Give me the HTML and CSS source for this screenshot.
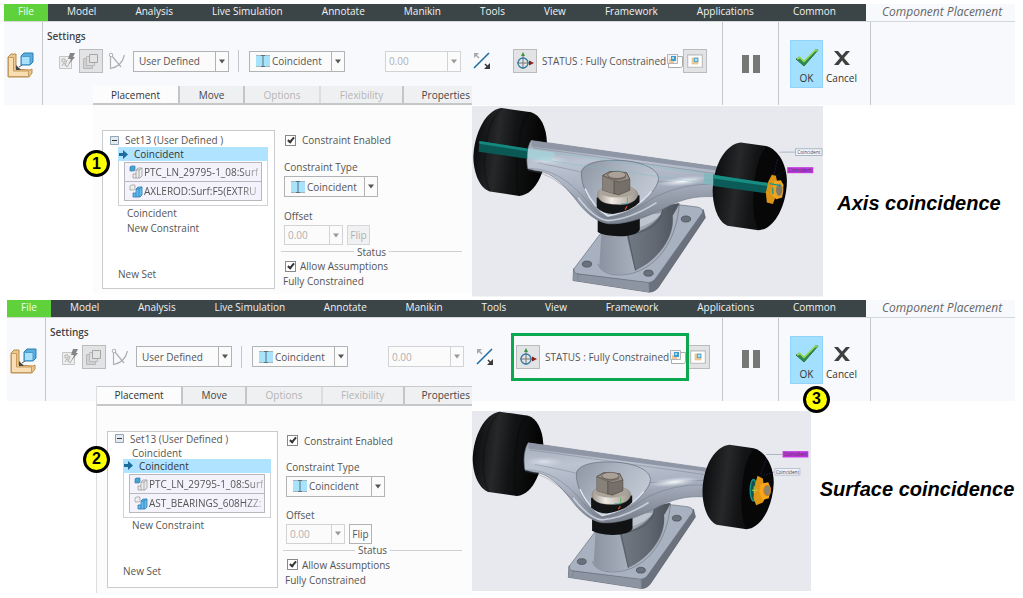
FILE: index.html
```html
<!DOCTYPE html>
<html lang="en">
<head>
<meta charset="utf-8">
<title>Component Placement</title>
<link rel="stylesheet" href="styles.css">
</head>
<body>
<svg class="defs" aria-hidden="true">
  <defs>
    <linearGradient id="rubber" x1="0" x2="1" y1="0" y2="0.15">
      <stop offset="0" stop-color="#060607"/><stop offset=".12" stop-color="#101112"/><stop offset=".38" stop-color="#27282a"/><stop offset=".6" stop-color="#131415"/><stop offset="1" stop-color="#030303"/>
    </linearGradient>
    <linearGradient id="alloy" x1="0" x2="0.15" y1="0" y2="1">
      <stop offset="0" stop-color="#a3abb9"/><stop offset=".3" stop-color="#bcc4d2"/><stop offset=".6" stop-color="#a9b1c0"/><stop offset="1" stop-color="#7d8592"/>
    </linearGradient>
    <linearGradient id="cup" x1="0" x2="1" y1="0" y2=".5">
      <stop offset="0" stop-color="#8d95a3"/><stop offset=".45" stop-color="#a9b1be"/><stop offset="1" stop-color="#c3cad6"/>
    </linearGradient>
    <linearGradient id="post" x1="0" x2="1" y1="0" y2="0">
      <stop offset="0" stop-color="#8b93a0"/><stop offset=".45" stop-color="#a8b0bd"/><stop offset="1" stop-color="#878f9b"/>
    </linearGradient>
    <linearGradient id="postside" x1="0" x2="1" y1="0" y2="0">
      <stop offset="0" stop-color="#727a85"/><stop offset=".6" stop-color="#5f666f"/><stop offset="1" stop-color="#4b5159"/>
    </linearGradient>
    <linearGradient id="washer" x1="0" x2="1" y1="0" y2="0">
      <stop offset="0" stop-color="#9d968d"/><stop offset=".35" stop-color="#eeeae4"/><stop offset="1" stop-color="#9b948b"/>
    </linearGradient>
    <radialGradient id="glint"><stop offset="0" stop-color="#fff" stop-opacity=".95"/><stop offset="1" stop-color="#e4ecf8" stop-opacity="0"/></radialGradient>
  </defs>

  <symbol id="i-assembly" viewBox="0 0 28 28">
    <path d="M1 6l3-3h5v15l14 1 2-1v4l-3 4H1z" fill="#e9c58f" stroke="#b98d4f"/>
    <path d="M1.500 6.500h5v13.500h15v5.500h-20z" fill="#f8deb2" stroke="#c69b5d"/>
    <path d="M14 5l3-3h9v9l-3 3h-9z" fill="#58aede" stroke="#2c7eb2"/>
    <path d="M14.500 5.500h8.500v8h-8.500z" fill="#a9e0fb" stroke="#4a9ccc"/>
    <path d="M15 14l-3 2" fill="none" stroke="#555"/><path d="M9 14v5h5z" fill="#444"/>
  </symbol>
  <symbol id="i-auto" viewBox="0 0 18 18">
    <path d="M1.500 4.500h12v12h-12z" fill="#eee" stroke="#c5c5c5"/>
    <path d="M4 7h3v3H4zM4 14l2-3 3 4 3-5M9 8l-2 6" fill="none" stroke="#b3b3b3"/>
    <path d="M12 1h5l-2 4h2l-6 7 2-5h-3z" fill="#858585"/>
  </symbol>
  <symbol id="i-window" viewBox="0 0 18 18">
    <path d="M1.500 6.500h9v10h-9z" fill="#d0d0d0" stroke="#b8b8b8"/>
    <path d="M4.500 4.500h8v9h-8z" fill="#ddd" stroke="#bbb"/>
    <path d="M7.500 2.500h8v8h-8z" fill="#e3e3e3" stroke="#a5a5a5"/>
  </symbol>
  <symbol id="i-curve" viewBox="0 0 18 18">
    <path d="M4 4l9 11M2.500 4.500v12C11 15 15 9 16.500 3" fill="none" stroke="#b0b0b0" stroke-width="1.200"/>
    <circle cx="3" cy="3" r="1.800" fill="#f8f9fc" stroke="#b0b0b0"/>
  </symbol>
  <symbol id="i-coincident" viewBox="0 0 14 12">
    <path d="M0 1h14v10H0z" fill="#a7e3fa"/><path d="M0 .5h14M0 11.500h14" stroke="#a5b5bd"/>
    <path d="M7 1v10M5 .5h4M5 11.500h4" stroke="#557480"/>
  </symbol>
  <symbol id="i-flip" viewBox="0 0 18 18">
    <path d="M1 16L16 1" stroke="#236da6" stroke-width="1.600"/>
    <path d="M1 6V1h5z" fill="#a9a9a9"/><path d="M3 3l3 3" stroke="#a9a9a9" stroke-width="1.500"/>
    <path d="M17 11v6h-6z" fill="#3a3a3a"/><path d="M12 12l3 3" stroke="#3a3a3a" stroke-width="1.500"/>
  </symbol>
  <symbol id="i-dragger" viewBox="0 0 18 18">
    <path d="M7 2v15M1 11h15" stroke="#777" />
    <circle cx="7" cy="11" r="5" fill="none" stroke="#327ba2" stroke-width="1.300"/>
    <path d="M7 0l2 4H5z" fill="#3d9140"/><path d="M18 11l-5-2.500v5z" fill="#8c2018"/>
  </symbol>
  <symbol id="i-separate" viewBox="0 0 16 16">
    <path d="M6.500 3.500h9v9q0 2-2 2h-12v-4" fill="#fff" stroke="#aaa"/>
    <path d="M.5 1.500h10v9h-10z" fill="#f1f2f4" stroke="#b5b5b5"/>
    <path d="M2 6h5v4H2z" fill="#edc998"/><path d="M4 3h5v5H4z" fill="#449ccb"/><path d="M5 4h2v2H5z" fill="#a4dcf5"/>
  </symbol>
  <symbol id="i-inwindow" viewBox="0 0 16 14">
    <path d="M1.500 1.500h13v11h-13z" fill="#fff" stroke="#bbb"/>
    <path d="M5 4h6v6H5z" fill="#ecc591"/><path d="M7 4h4v4H7z" fill="#55a9d5"/><path d="M8 5h2v2H8z" fill="#b5e4fa"/>
  </symbol>
  <symbol id="i-pause" viewBox="0 0 18 18"><path d="M0 0h7v18H0zM11 0h7v18h-7z" fill="#777"/></symbol>
  <symbol id="i-ok" viewBox="0 0 24 18">
    <path d="M1 10l4-2 4 4L20 1h3L9 17z" fill="#2d8b4c" stroke="#297842"/>
    <path d="M2 10l3-1.500 4 4L20 1.500h2.500" fill="none" stroke="#a3dd58" stroke-width="1.500"/>
  </symbol>
  <symbol id="i-cancel" viewBox="0 0 16 14"><path d="M0 0h4l4 4.500L12 0h4l-6 7 6 7h-4.500L8 9.500 4.500 14H0l6-7z" fill="#3f3f3f"/></symbol>
  <symbol id="i-down" viewBox="0 0 6 4"><path d="M0 0h6L3 4z" fill="currentColor"/></symbol>
  <symbol id="i-minus" viewBox="0 0 9 9"><path d="M.5.5h8v8h-8z" fill="#e3eaf1" stroke="#91a5b5"/><path d="M2 4.500h5" stroke="#333"/></symbol>
  <symbol id="i-arrow" viewBox="0 0 9 9"><path d="M0 3h4V0l5 4.500L4 9V6H0z" fill="#1c6d9c"/></symbol>
  <symbol id="i-comp" viewBox="0 0 14 14">
    <path d="M1 2l1-1h4v4L5 6H1z" fill="#45a3d9" stroke="#317ea9" stroke-width=".7"/>
    <path d="M4 9h3V5l2-2h4v8l-2 2H4z" fill="#eee" stroke="#999" stroke-width=".8"/><path d="M7 13V9M10 13V5l3-2M7 5h3" fill="none" stroke="#999" stroke-width=".8"/>
  </symbol>
  <symbol id="i-asm" viewBox="0 0 14 14">
    <path d="M1 2l1-1h4v4L5 6H1z" fill="#eee" stroke="#999" stroke-width=".7"/>
    <path d="M4 9h3V5l2-2h4v8l-2 2H4z" fill="#69baf0" stroke="#287fae" stroke-width=".8"/><path d="M7 13V9M10 13V5l3-2M7 5h3" fill="none" stroke="#287fae" stroke-width=".8"/>
  </symbol>

  <!-- Skateboard truck: base plate, post, hanger, bushing, both wheels -->
  <g id="truck" stroke-linejoin="round">
    <path d="M312 505L310 540 538 575Q556 574 566 560L706 352 700 328 560 470z" fill="#6b727d" stroke="#555c66" stroke-width="2"/>
    <path d="M312 510L310 540 538 575V546L325 521z" fill="#8d95a2"/>
    <path d="M392 400L313 505Q311 518 325 520L535 546Q551 545 560 530L697 338Q702 323 680 320L622 313 500 380z" fill="#a8b1bf" stroke="#676f7c" stroke-width="2"/>
    <path d="M325 520L324 541M535 546L540 574M560 530L568 556" stroke="#636b76" fill="none"/>
    <path d="M385 490C395 525 450 530 495 516 560 495 620 425 628 312" fill="none" stroke="#6d7581" stroke-width="2"/>
    <path d="M395 395L389 496C400 524 470 528 496 512 570 475 618 410 608 345L628 312 545 325 470 395z" fill="url(#post)"/>
    <path d="M470 405L496 511C565 478 615 410 608 345L628 308 578 318C580 355 530 390 470 405z" fill="url(#postside)"/>
    <path d="M500 385Q555 370 576 338L545 340 500 362z" fill="#bdc4ce" stroke="#7b838f"/>
    <path d="M475 405L497 510M577 320Q582 380 490 401M608 345L628 310" fill="none" stroke="#454c55" stroke-width="2"/>
    <g fill="#69717d" stroke="#3f4650" stroke-width="2"><ellipse cx="352" cy="491" rx="14" ry="9"/><ellipse cx="536" cy="518" rx="14" ry="9"/><ellipse cx="648" cy="356" rx="14" ry="9"/></g>
    <path d="M384 350V395Q400 406 448 408 500 407 510 388V340z" fill="#111214"/>
    <path d="M97 24L185 37C212 45 230 80 232 125 234 195 205 282 150 287L62 274C30 265 12 215 12 170 14 100 50 28 97 24z" fill="url(#rubber)"/>
    <path d="M182 37C140 55 135 275 150 286M97 25C45 70 30 210 62 274" fill="none" stroke="#000" stroke-opacity=".2" stroke-width="7"/>
    <path d="M185 121L740 200V290C690 286 650 292 600 315 540 348 470 374 415 370 380 365 345 335 320 300 280 250 245 214 200 212L175 206C169 175 173 140 185 121z" fill="url(#alloy)" stroke="#737b89" stroke-width="2"/>
    <path d="M186 121L740 200V211L186 139z" fill="#8f97a6"/>
    <path d="M190 143L735 220M205 188Q290 205 332 215M180 205Q270 205 350 300 390 350 415 353 470 350 560 288 640 250 732 252M565 245L735 238M175 210Q250 215 325 300M468 182V215" fill="none" stroke="#59616f" stroke-width="1.500" opacity=".65"/>
    <ellipse cx="640" cy="243" rx="78" ry="14" fill="url(#glint)" transform="rotate(-6 640 243)"/>
    <ellipse cx="235" cy="180" rx="60" ry="15" fill="url(#glint)" opacity=".55"/>
    <path d="M335 215C345 180 420 178 468 182 520 188 563 205 566 235 563 275 500 330 415 347 368 325 334 265 335 215z" fill="url(#cup)" stroke="#5f6774" stroke-width="2"/>
    <path d="M346 265Q370 320 415 347 500 330 545 273" fill="none" stroke="#dce2ec" stroke-width="5"/>
    <path d="M325 292Q375 358 415 361 480 357 560 307" fill="none" stroke="#d6ddea" stroke-width="5" opacity=".8"/>
    <path d="M381 292V322Q398 341 430 341 485 333 509 306V285z" fill="#131416"/>
    <path d="M383 283Q383 258 445 255 502 258 505 283C500 308 470 315 440 313 405 312 385 303 383 283z" fill="url(#washer)" stroke="#776f66"/>
    <ellipse cx="443" cy="275" rx="51" ry="17" fill="#aaa399"/>
    <path d="M399 226L421 214 470 217 480 237V270L447 284 399 270z" fill="#756f69" stroke="#4f4945" stroke-width="2"/>
    <path d="M399 226L421 214 470 217 480 237 448 245z" fill="#999188" stroke="#554e48" stroke-width="2"/>
    <path d="M399 228L433 243V280L399 270z" fill="#88817a"/>
    <path d="M433 242V282" stroke="#46413d" stroke-width="2"/>
    <path d="M415 224V233Q440 249 468 234V224z" fill="#79726b"/><ellipse cx="441" cy="224" rx="27" ry="11" fill="#aaa299" stroke="#57504a" stroke-width="2"/>
    <path d="M473 291V312" stroke="#39b53a" stroke-width="2"/><path d="M453 311H473" stroke="#3197b0" stroke-width="2"/><path d="M472 318L466 328" stroke="#d34b2a" stroke-width="4"/>
    <path d="M812 127L888 138C925 148 950 195 950 245 948 320 910 388 865 390L772 376C745 365 728 320 728 270 730 190 770 130 812 127z" fill="url(#rubber)"/>
    <path d="M890 140C925 153 948 198 947 248 945 317 910 383 868 387 850 370 846 315 852 260 856 205 868 158 890 140z" fill="#070708"/>
  </g>
</svg>

<main class="page">
  <section class="step step-axis" aria-label="Axis coincidence">
    <header class="ribbon">
      <nav class="menu" aria-label="Ribbon tabs">
        <button class="file">File</button>
        <div class="menu-items"><button>Model</button><button>Analysis</button><button>Live Simulation</button><button>Annotate</button><button>Manikin</button><button>Tools</button><button>View</button><button>Framework</button><button>Applications</button><button>Common</button></div>
        <h1 class="context">Component Placement</h1>
      </nav>
      <div class="groups">
        <div class="group group-logo"><svg class="logo"><use href="#i-assembly"/></svg></div>
        <div class="group group-settings">
          <h2 class="group-title">Settings</h2>
          <div class="tools">
            <button class="tool" aria-label="Automatic"><svg><use href="#i-auto"/></svg></button>
            <button class="tool framed" aria-label="Interface"><svg><use href="#i-window"/></svg></button>
            <button class="tool" aria-label="Curve"><svg><use href="#i-curve"/></svg></button>
            <div class="combo"><select aria-label="Connection set"><option>User Defined</option></select><svg class="drop"><use href="#i-down"/></svg></div>
            <span class="rule"></span>
            <div class="combo"><svg class="kind"><use href="#i-coincident"/></svg><select aria-label="Constraint"><option>Coincident</option></select><svg class="drop"><use href="#i-down"/></svg></div>
            <div class="combo number off"><input aria-label="Offset value" value="0.00" disabled><svg class="drop"><use href="#i-down"/></svg></div>
            <button class="tool" aria-label="Flip direction"><svg><use href="#i-flip"/></svg></button>
            <div class="status">
              <button class="tool framed" aria-label="3D dragger"><svg><use href="#i-dragger"/></svg></button>
              <span>STATUS : Fully Constrained</span>
              <button class="tool small" aria-label="Separate window"><svg><use href="#i-separate"/></svg></button>
            </div>
            <button class="tool framed" aria-label="Main window"><svg><use href="#i-inwindow"/></svg></button>
          </div>
        </div>
        <div class="group group-pause"><button class="pause" aria-label="Pause"><svg><use href="#i-pause"/></svg></button></div>
        <div class="group group-finish">
          <button class="finish ok"><svg><use href="#i-ok"/></svg>OK</button>
          <button class="finish"><svg class="cross"><use href="#i-cancel"/></svg>Cancel</button>
        </div>
      </div>
    </header>
    <div class="workspace">
      <div class="panel">
        <div class="tabs" role="tablist"><button role="tab" aria-selected="true">Placement</button><button role="tab">Move</button><button role="tab" disabled>Options</button><button role="tab" disabled>Flexibility</button><button role="tab">Properties</button></div>
        <div class="panel-body">
          <div class="sets">
            <div class="set-name"><svg><use href="#i-minus"/></svg>Set13 (User Defined )</div>
            <div class="active">
              <div class="active-name"><svg><use href="#i-arrow"/></svg>Coincident</div>
              <ul class="refs"><li><svg><use href="#i-comp"/></svg><span>PTC_LN_29795-1_08:Surf</span></li><li><svg><use href="#i-asm"/></svg><span>AXLEROD:Surf:F5(EXTRU</span></li></ul>
            </div>
            <div class="row">Coincident</div>
            <div class="row">New Constraint</div>
            <div class="new-set">New Set</div>
          </div>
          <form class="form">
            <label class="check"><input type="checkbox" checked>Constraint Enabled</label>
            <label class="field" for="type1">Constraint Type</label>
            <div class="combo"><svg class="kind"><use href="#i-coincident"/></svg><select id="type1"><option>Coincident</option></select><svg class="drop"><use href="#i-down"/></svg></div>
            <label class="field" for="offset1">Offset</label>
            <div class="offset"><div class="combo off"><input id="offset1" value="0.00" disabled><svg class="drop"><use href="#i-down"/></svg></div><button type="button" class="flip" disabled>Flip</button></div>
            <div class="divider">Status</div>
            <label class="check tight"><input type="checkbox" checked>Allow Assumptions</label>
            <div class="result">Fully Constrained</div>
          </form>
        </div>
      </div>
      <svg class="scene" viewBox="8 18 1050 570" role="img" aria-label="Skateboard truck aligned on the axle">
        <path d="M8 18h1050v570H8z" fill="#e8e9ee"/>
        <use href="#truck"/>
        <path d="M30 123L173 145V176L28 155z" fill="#0b5955"/><path d="M30 123L173 145V153L30 131z" fill="#16887f"/>
        <path d="M175 145L258 158 244 184 175 175z" fill="#a4d4dc" opacity=".75"/>
        <path d="M250 158L730 224M245 183L705 249" stroke="#73bec8" stroke-width="2" opacity=".6"/>
        <path d="M702 220L732 224V256L702 251z" fill="#7bb8bd" opacity=".8"/>
        <path d="M730 224L925 253 888 279 730 257z" fill="#0b5c58"/><path d="M730 224L925 253V262L730 235z" fill="#178d84"/>
        <path d="M905 224l12 3 5 22-4 36-10 26-18-4-3-30 8-34z" fill="#dc9414"/>
        <path d="M912 242l20-2 8 14-4 38-18 5-15-16z" fill="#f0a720"/>
        <ellipse cx="927" cy="269" rx="11" ry="19" fill="#817b65" stroke="#e2a336" stroke-width="3"/>
        <path d="M898 250l34 6M908 262v20" stroke="#19948b" stroke-width="4"/>
        <path d="M922 178l-12 48M945 211l-26 16" stroke="#282870" stroke-width="2" stroke-dasharray="5 4"/>
        <path d="M928 156h48" stroke="#8c9cac" stroke-width="2"/>
        <path d="M976 146h79v20h-79z" fill="#f4f7fc" stroke="#8499ad" stroke-width="2"/><text x="981" y="161">Coincident</text>
        <path d="M951 201h78v18h-78z" fill="#bf36de"/><text x="955" y="215">Coincident</text>
      </svg>
      <p class="caption">Axis coincidence</p>
    </div>
    <span class="callout callout-set">1</span>
  </section>

  <section class="step step-surface" aria-label="Surface coincidence">
    <header class="ribbon">
      <nav class="menu" aria-label="Ribbon tabs">
        <button class="file">File</button>
        <div class="menu-items"><button>Model</button><button>Analysis</button><button>Live Simulation</button><button>Annotate</button><button>Manikin</button><button>Tools</button><button>View</button><button>Framework</button><button>Applications</button><button>Common</button></div>
        <h1 class="context">Component Placement</h1>
      </nav>
      <div class="groups">
        <div class="group group-logo"><svg class="logo"><use href="#i-assembly"/></svg></div>
        <div class="group group-settings">
          <h2 class="group-title">Settings</h2>
          <div class="tools">
            <button class="tool" aria-label="Automatic"><svg><use href="#i-auto"/></svg></button>
            <button class="tool framed" aria-label="Interface"><svg><use href="#i-window"/></svg></button>
            <button class="tool" aria-label="Curve"><svg><use href="#i-curve"/></svg></button>
            <div class="combo"><select aria-label="Connection set"><option>User Defined</option></select><svg class="drop"><use href="#i-down"/></svg></div>
            <span class="rule"></span>
            <div class="combo"><svg class="kind"><use href="#i-coincident"/></svg><select aria-label="Constraint"><option>Coincident</option></select><svg class="drop"><use href="#i-down"/></svg></div>
            <div class="combo number off"><input aria-label="Offset value" value="0.00" disabled><svg class="drop"><use href="#i-down"/></svg></div>
            <button class="tool" aria-label="Flip direction"><svg><use href="#i-flip"/></svg></button>
            <div class="status marked">
              <button class="tool framed" aria-label="3D dragger"><svg><use href="#i-dragger"/></svg></button>
              <span>STATUS : Fully Constrained</span>
              <button class="tool small" aria-label="Separate window"><svg><use href="#i-separate"/></svg></button>
            </div>
            <button class="tool framed" aria-label="Main window"><svg><use href="#i-inwindow"/></svg></button>
          </div>
        </div>
        <div class="group group-pause"><button class="pause" aria-label="Pause"><svg><use href="#i-pause"/></svg></button></div>
        <div class="group group-finish">
          <button class="finish ok"><svg><use href="#i-ok"/></svg>OK</button>
          <button class="finish"><svg class="cross"><use href="#i-cancel"/></svg>Cancel</button>
        </div>
      </div>
    </header>
    <div class="workspace">
      <div class="panel">
        <div class="tabs" role="tablist"><button role="tab" aria-selected="true">Placement</button><button role="tab">Move</button><button role="tab" disabled>Options</button><button role="tab" disabled>Flexibility</button><button role="tab">Properties</button></div>
        <div class="panel-body">
          <div class="sets">
            <div class="set-name"><svg><use href="#i-minus"/></svg>Set13 (User Defined )</div>
            <div class="row first">Coincident</div>
            <div class="active">
              <div class="active-name"><svg><use href="#i-arrow"/></svg>Coincident</div>
              <ul class="refs"><li><svg><use href="#i-comp"/></svg><span>PTC_LN_29795-1_08:Surf</span></li><li><svg><use href="#i-asm"/></svg><span>AST_BEARINGS_608HZZ:</span></li></ul>
            </div>
            <div class="row">New Constraint</div>
            <div class="new-set">New Set</div>
          </div>
          <form class="form">
            <label class="check"><input type="checkbox" checked>Constraint Enabled</label>
            <label class="field" for="type2">Constraint Type</label>
            <div class="combo"><svg class="kind"><use href="#i-coincident"/></svg><select id="type2"><option>Coincident</option></select><svg class="drop"><use href="#i-down"/></svg></div>
            <label class="field" for="offset2">Offset</label>
            <div class="offset"><div class="combo off"><input id="offset2" value="0.00" disabled><svg class="drop"><use href="#i-down"/></svg></div><button type="button" class="flip">Flip</button></div>
            <div class="divider">Status</div>
            <label class="check tight"><input type="checkbox" checked>Allow Assumptions</label>
            <div class="result">Fully Constrained</div>
          </form>
        </div>
      </div>
      <svg class="scene" viewBox="8 30 1014 540" role="img" aria-label="Skateboard truck with the bearing surface aligned">
        <path d="M8 30h1014v540H8z" fill="#e8e9ee"/>
        <use href="#truck" transform="translate(-1.500 9) scale(.96)"/>
        <ellipse cx="850" cy="267" rx="10" ry="32" fill="#11544f" stroke="#19958a" stroke-width="4"/>
        <path d="M862 224l16 8 4 28 8 20-12 24-20 8-8-20 4-40z" fill="#df9715"/>
        <path d="M872 248l22-5 8 18-6 30-19 5-10-24z" fill="#fba51b"/>
        <ellipse cx="891" cy="268" rx="10" ry="15" fill="#8d8571" stroke="#c77e19" stroke-width="3"/>
        <path d="M852 255v22M845 267h18" stroke="#bcd34a" stroke-width="3"/>
        <path d="M888 172l-18 52M910 213l-36 12" stroke="#282870" stroke-width="2" stroke-dasharray="5 4"/>
        <path d="M888 160h48" stroke="#8c9cac" stroke-width="2"/>
        <path d="M937 150h77v19h-77z" fill="#bf36de"/><text x="941" y="164">Coincident</text>
        <path d="M914 202h75v20h-75z" fill="#f0f3f8" stroke="#9fb0c0" stroke-width="2"/><text x="917" y="217">Coincident</text>
      </svg>
      <p class="caption">Surface coincidence</p>
    </div>
    <span class="callout callout-set">2</span>
    <span class="callout callout-ok">3</span>
  </section>
</main>
</body>
</html>
```
FILE: styles.css
```css
* { box-sizing: border-box; }

body {
  margin: 0;
  background: #fff;
  color: #555;
  font: 10px/14px "Open Sans", "Noto Sans", sans-serif;
}

button, input, select {
  margin: 0;
  padding: 0;
  border: 0;
  background: none;
  color: inherit;
  font: inherit;
}

h1, h2, p, ul { margin: 0; padding: 0; list-style: none; }
svg { display: block; flex: none; }
.defs { position: absolute; width: 0; height: 0; }

.page { display: flex; flex-direction: column; gap: 3px; padding-top: 4px; }
.step { position: relative; }

/* Ribbon */
.ribbon { margin: 0 8px 0 var(--edge); background: #f8f9fc; }
.step-axis { --edge: 4px; --indent: 93px; --gap: 10px; --gap-offset: 12px; }
.step-surface { --edge: 7px; --indent: 96px; --gap: 9px; --gap-offset: 11px; }

.menu { display: flex; height: 17px; }
.file { width: 44px; background: #5fd23b; color: #f2fff0; }
.menu-items {
  display: flex;
  flex: 1;
  justify-content: space-between;
  padding: 0 30px 0 19px;
  background: #3b4446;
  color: #f1f3f3;
}
.menu button { line-height: 15px; padding-bottom: 2px; }
.context {
  width: 149px;
  padding-left: 16px;
  color: #666;
  font-size: 12px;
  font-style: italic;
  font-weight: 400;
  line-height: 15px;
  white-space: nowrap;
}

.groups { display: flex; height: 84px; border-top: 1px solid #d5d8da; }
.group { flex: none; border-right: 1px solid #c4c6c9; }
.group-logo { width: 39px; padding: 29px 0 0 3px; }
.logo { width: 28px; height: 28px; }
.group.group-settings { flex: 1; min-width: 0; padding: 7px 0 0 4px; }
.group-title { color: #444; font-size: 10px; font-weight: 600; line-height: 14px; }
.tools { display: flex; align-items: center; height: 24px; margin: 6px 0 0 11px; }
.tool { display: flex; flex: none; align-items: center; justify-content: center; width: 18px; height: 24px; }
.tool svg { width: 18px; height: 18px; }
.tool.framed { width: 24px; border: 1px solid #bbb; background: #e2e3e5; }
.tool.small, .tool.small svg { width: 16px; }
.tool.small svg { height: 16px; }
.tool + .tool { margin-left: 3px; }
.tool.framed + .tool { margin-left: 5px; }
.tools > .combo { flex: none; width: 96px; margin-left: 7px; }
.rule { width: 1px; height: 22px; margin: 0 3px 0 9px; background: #c3c5c8; }
.tools > .combo.number { width: 76px; margin: 0 12px 0 40px; }
.status { position: relative; display: flex; align-items: center; margin-left: 22px; white-space: nowrap; }
.status span { margin: 0 1px 0 5px; }
.status.marked::after {
  content: "";
  position: absolute;
  inset: -12px -3px -12px -5px;
  border: 3px solid #0ba94f;
}
.group-pause { display: flex; align-items: center; justify-content: center; width: 56px; }
.pause svg { width: 18px; height: 18px; }
.group-finish { display: flex; align-items: flex-start; width: 92px; margin-right: 144px; padding: 18px 0 0 11px; }
.finish { display: flex; flex-direction: column; align-items: center; width: 33px; height: 48px; padding-top: 8px; border: 1px solid transparent; color: #333; }
.finish + .finish { margin-left: 2px; }
.finish svg { width: 24px; height: 18px; margin-bottom: 4px; }
.finish .cross { width: 16px; height: 14px; margin: 2px 0 6px; }
.finish.ok { border-color: #90d4fa; background: #a3e0ff; }

/* Drop-down and value boxes */
.combo { display: flex; align-items: center; height: 21px; border: 1px solid #b2b3b5; background: #fbfbfc; }
.combo select, .combo input { flex: 1; min-width: 0; height: 19px; padding-left: 5px; appearance: none; outline: 0; }
.combo .kind { width: 14px; height: 12px; margin-left: 6px; }
.combo .kind + select { padding-left: 2px; }
.combo .drop { width: 13px; height: 19px; padding: 7px 3px; border-left: 1px solid #b2b3b5; color: #555; }
.combo.off { border-color: #d2d3d5; color: #b5b5b5; }
.combo.off input { padding-left: 3px; color: #b0b0b0; }
.combo.off .drop { border-color: #d2d3d5; color: #999; }

/* Placement dashboard */
.workspace { position: relative; display: grid; align-items: start; margin-left: var(--indent); }
.step-axis .workspace { grid-template-columns: 379fr 351fr 200fr; margin-top: -19px; }
.step-surface .workspace { grid-template-columns: 376fr 339fr 212fr; margin-top: -15px; }
.panel { background: #fcfcfc; }
.tabs { display: grid; grid-template-columns: 87fr 65fr 76fr 83fr 68fr; height: 19px; border-bottom: 2px solid #c5c7c9; background: #eff0f2; }
.tabs button { border-right: 2px solid #c3c5c7; color: #444; line-height: 16px; }
.tabs button:disabled { border-right-color: #dcdddf; color: #b5b5b5; }
.tabs button:nth-child(4) { border-right-color: #c3c5c7; }
.tabs button:last-child { padding-right: 2px; border: 0; text-align: right; }
.tabs [aria-selected] { background: #fcfcfc; font-weight: 500; color: #333; }
.step-surface .tabs { height: 20px; border-top: 1px solid #c8c9cb; }
.step-surface .panel { border-left: 1px solid #dcdddf; }

.panel-body { display: flex; gap: 7px; padding: 25px 10px 5px 9px; }
.step-surface .panel-body { padding-left: 10px; }
.sets { width: 173px; height: 159px; padding: 2px 6px 0 15px; border: 1px solid #c9cbcd; background: #fff; }
.step-surface .sets { width: 171px; height: 157px; padding-top: 0; }
.set-name { display: flex; align-items: center; gap: 6px; height: 14px; margin-left: -8px; white-space: nowrap; }
.set-name svg, .active-name svg { width: 9px; height: 9px; }
.active { height: 59px; border: 1px solid #cfd1d3; background: #fff; }
.active-name { display: flex; align-items: center; gap: 6px; height: 14px; margin: -1px -1px 0; padding-left: 1px; background: #b0e3ff; color: #333; }
.refs { margin: 1px 5px 0; border: 1px solid #b7b7bd; background: #f4f2fb; }
.refs li { display: flex; align-items: center; gap: 1px; height: 18px; padding-left: 4px; white-space: nowrap; }
.refs li + li { height: 19px; border-top: 1px solid #b7b7bd; }
.refs svg { width: 14px; height: 14px; }
.refs span { mask-image: linear-gradient(to right, #000 85%, #0006); }
.row { height: 15px; padding-left: 9px; }
.row.first { height: 13px; }
.new-set { margin-top: 31px; }

.form { flex: 1; padding-left: 2px; }
.step-surface .form { padding-left: 1px; }
.check { display: flex; align-items: center; gap: 6px; height: 20px; padding-left: 1px; }
.check.tight { gap: 4px; height: 16px; }
.check input {
  width: 11px;
  height: 11px;
  appearance: none;
  border: 1px solid #888;
  background: #fff;
}
.check input:checked::before {
  content: "";
  display: block;
  width: 2px;
  height: 5px;
  margin: 0 0 0 3px;
  border: solid #333;
  border-width: 0 2px 2px 0;
  transform: rotate(40deg);
}
.field { display: block; height: 14px; margin: var(--gap) 0 2px; }
.form > .combo { width: 94px; }
.step-surface .form > .combo { width: 99px; }
.form > .combo ~ .field { margin-top: var(--gap-offset); }
.offset { display: flex; gap: 4px; }
.offset .combo { width: 59px; height: 20px; }
.flip { width: 23px; height: 20px; border: 1px solid #b2b3b5; }
.flip:disabled { border-color: #d5d6d8; background: #f1f1f3; color: #b0b0b0; }
.divider { display: flex; align-items: center; gap: 3px; height: 13px; margin-left: -3px; }
.divider::before, .divider::after { content: ""; flex: 1; height: 1px; background: #cfd0d3; }
.result { margin-left: -1px; }

/* Model view */
.scene { width: 100%; margin-top: 20px; }
.step-surface .scene { margin-top: 25px; }
.scene text { fill: #44405a; font: 14px "Open Sans", "Noto Sans", sans-serif; }
.caption {
  align-self: center;
  color: #000;
  font: italic bold 20px/24px "Liberation Sans", Arial, sans-serif;
  text-align: center;
  white-space: nowrap;
}
.step-axis .caption { padding: 24px 8px 0 0; }

/* Numbered markers laid over the steps */
.callout {
  position: absolute;
  display: grid;
  place-items: center;
  width: 27px;
  height: 27px;
  border: 3px solid #000;
  border-radius: 50%;
  background: #ff0;
  color: #000;
  font: bold 16px/20px "Liberation Sans", Arial, sans-serif;
}
.callout-set { left: 83px; top: 146px; }
.callout-ok { left: 803px; top: 86px; }
```
